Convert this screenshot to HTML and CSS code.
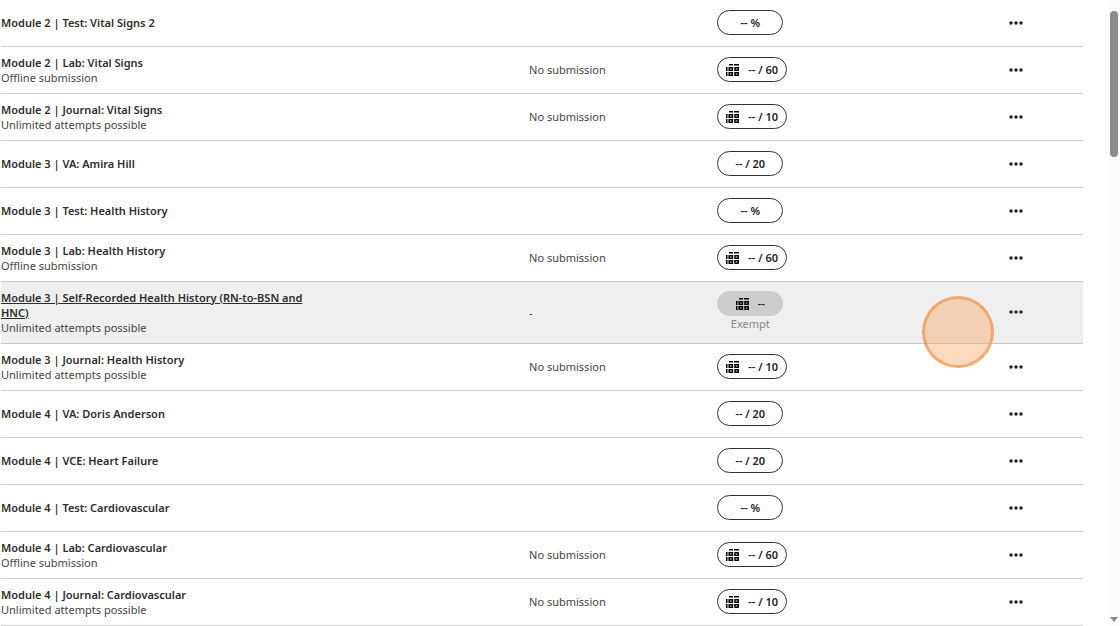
FILE: index.html
```html
<!DOCTYPE html>
<html lang="en">
<head>
  <meta charset="UTF-8">
  <meta name="viewport" content="width=device-width, initial-scale=1.0">
  <title>Gradebook</title>
  <link rel="stylesheet" href="styles.css">
</head>
<body>
  <svg class="sprite" aria-hidden="true">
    <symbol id="rubric" viewBox="0 0 14 14">
      <path d="M3 1h4v1.5H3zM8 1h5v1.5H8zM0 4h1.5v4H0zM0 9h1.5v4H0z"/>
      <path d="M3.2 4.7h3.2v2.6H3.2zM9 4.7h3.2v2.6H9zM3.2 9.7h3.2v2.6H3.2zM9 9.7h3.2v2.6H9z" fill="none" stroke="#000" stroke-width="1.5"/>
    </symbol>
    <symbol id="dots" viewBox="0 0 14 4">
      <circle cx="2" cy="2" r="1.7"/>
      <circle cx="7" cy="2" r="1.7"/>
      <circle cx="12" cy="2" r="1.7"/>
    </symbol>
  </svg>

  <main class="content">
    <table class="grades">
      <colgroup>
        <col class="col-item">
        <col class="col-status">
        <col class="col-grade">
        <col class="col-menu">
      </colgroup>
      <tbody>
        <tr>
          <td><a href="#">Module 2 | Test: Vital Signs 2</a></td>
          <td></td>
          <td><span class="pill">-- %</span></td>
          <td><button class="more" aria-label="More options"><svg><use href="#dots"/></svg></button></td>
        </tr>
        <tr>
          <td><a href="#">Module 2 | Lab: Vital Signs</a><p>Offline submission</p></td>
          <td>No submission</td>
          <td><span class="pill"><svg><use href="#rubric"/></svg>-- / 60</span></td>
          <td><button class="more" aria-label="More options"><svg><use href="#dots"/></svg></button></td>
        </tr>
        <tr>
          <td><a href="#">Module 2 | Journal: Vital Signs</a><p>Unlimited attempts possible</p></td>
          <td>No submission</td>
          <td><span class="pill"><svg><use href="#rubric"/></svg>-- / 10</span></td>
          <td><button class="more" aria-label="More options"><svg><use href="#dots"/></svg></button></td>
        </tr>
        <tr>
          <td><a href="#">Module 3 | VA: Amira Hill</a></td>
          <td></td>
          <td><span class="pill">-- / 20</span></td>
          <td><button class="more" aria-label="More options"><svg><use href="#dots"/></svg></button></td>
        </tr>
        <tr>
          <td><a href="#">Module 3 | Test: Health History</a></td>
          <td></td>
          <td><span class="pill">-- %</span></td>
          <td><button class="more" aria-label="More options"><svg><use href="#dots"/></svg></button></td>
        </tr>
        <tr>
          <td><a href="#">Module 3 | Lab: Health History</a><p>Offline submission</p></td>
          <td>No submission</td>
          <td><span class="pill"><svg><use href="#rubric"/></svg>-- / 60</span></td>
          <td><button class="more" aria-label="More options"><svg><use href="#dots"/></svg></button></td>
        </tr>
        <tr class="active">
          <td><a href="#">Module 3 | Self-Recorded Health History (RN-to-BSN and HNC)</a><p>Unlimited attempts possible</p></td>
          <td>-</td>
          <td><span class="pill exempt"><svg><use href="#rubric"/></svg>--</span><p class="note">Exempt</p></td>
          <td><button class="more" aria-label="More options"><svg><use href="#dots"/></svg></button></td>
        </tr>
        <tr>
          <td><a href="#">Module 3 | Journal: Health History</a><p>Unlimited attempts possible</p></td>
          <td>No submission</td>
          <td><span class="pill"><svg><use href="#rubric"/></svg>-- / 10</span></td>
          <td><button class="more" aria-label="More options"><svg><use href="#dots"/></svg></button></td>
        </tr>
        <tr>
          <td><a href="#">Module 4 | VA: Doris Anderson</a></td>
          <td></td>
          <td><span class="pill">-- / 20</span></td>
          <td><button class="more" aria-label="More options"><svg><use href="#dots"/></svg></button></td>
        </tr>
        <tr>
          <td><a href="#">Module 4 | VCE: Heart Failure</a></td>
          <td></td>
          <td><span class="pill">-- / 20</span></td>
          <td><button class="more" aria-label="More options"><svg><use href="#dots"/></svg></button></td>
        </tr>
        <tr>
          <td><a href="#">Module 4 | Test: Cardiovascular</a></td>
          <td></td>
          <td><span class="pill">-- %</span></td>
          <td><button class="more" aria-label="More options"><svg><use href="#dots"/></svg></button></td>
        </tr>
        <tr>
          <td><a href="#">Module 4 | Lab: Cardiovascular</a><p>Offline submission</p></td>
          <td>No submission</td>
          <td><span class="pill"><svg><use href="#rubric"/></svg>-- / 60</span></td>
          <td><button class="more" aria-label="More options"><svg><use href="#dots"/></svg></button></td>
        </tr>
        <tr>
          <td><a href="#">Module 4 | Journal: Cardiovascular</a><p>Unlimited attempts possible</p></td>
          <td>No submission</td>
          <td><span class="pill"><svg><use href="#rubric"/></svg>-- / 10</span></td>
          <td><button class="more" aria-label="More options"><svg><use href="#dots"/></svg></button></td>
        </tr>
      </tbody>
    </table>
  </main>

  <div class="scrollbar">
    <div class="thumb"></div>
    <div class="arrow"></div>
  </div>

  <div class="click-marker"></div>
</body>
</html>
```
FILE: styles.css
```css
* {
  box-sizing: border-box;
}

body {
  margin: 0;
  height: 100vh;
  display: flex;
  position: relative;
  overflow: hidden;
  background: #fff;
  color: #444;
  font-family: "Noto Sans", "Open Sans", sans-serif;
  font-size: 11px;
  line-height: 15px;
}

p {
  margin: 0;
}

.sprite {
  display: none;
}

.content {
  flex: 1;
  padding: 0 25px 0 1px;
}

/* grades table */
.grades {
  width: 100%;
  table-layout: fixed;
  border-collapse: separate;
  border-spacing: 0;
}

.col-item {
  width: 48.8%;
}

.col-status {
  width: 17.4%;
}

.col-grade {
  width: 27%;
}

.grades td {
  height: 47px;
  padding: 0 0 1px;
  border-bottom: 1px solid #ccc;
  vertical-align: middle;
}

.grades a {
  display: block;
  max-width: 330px;
  color: #2d2d2d;
  font-weight: 600;
  text-decoration: none;
}

.grades .active td {
  height: 62px;
  background: #efefef;
}

.grades .active a {
  text-decoration: underline;
}

/* grade pills */
.pill {
  display: inline-flex;
  align-items: center;
  justify-content: center;
  gap: 8px;
  min-width: 66px;
  height: 25px;
  padding: 0 8px;
  border: 1px solid #333;
  border-radius: 13px;
  background: #fff;
  color: #222;
  font-weight: 600;
  vertical-align: middle;
}

.pill svg {
  width: 14px;
  height: 14px;
}

.exempt {
  background: #ccc;
  border-color: #ccc;
}

.note {
  width: 66px;
  padding-bottom: 2px;
  color: #888;
  text-align: center;
}

.more {
  display: flex;
  padding: 8px 0;
  border: none;
  background: none;
  cursor: pointer;
}

.more svg {
  width: 14px;
  height: 4px;
  fill: #222;
}

/* scrollbar */
.scrollbar {
  display: flex;
  flex-direction: column;
  align-items: center;
  justify-content: space-between;
  width: 12px;
  padding: 11px 0 4px;
  background: #fbfbfb;
}

.thumb {
  width: 8px;
  height: 146px;
  border-radius: 4px;
  background: #8b8b8b;
}

.arrow {
  border: 4px solid transparent;
  border-top: 5px solid #8b8b8b;
  border-bottom: none;
}

/* orange circle over the last click */
.click-marker {
  position: absolute;
  top: 296px;
  left: 922px;
  width: 72px;
  height: 72px;
  border: 3px solid rgba(240, 150, 80, 0.7);
  border-radius: 50%;
  background: rgba(250, 160, 90, 0.4);
}
```
